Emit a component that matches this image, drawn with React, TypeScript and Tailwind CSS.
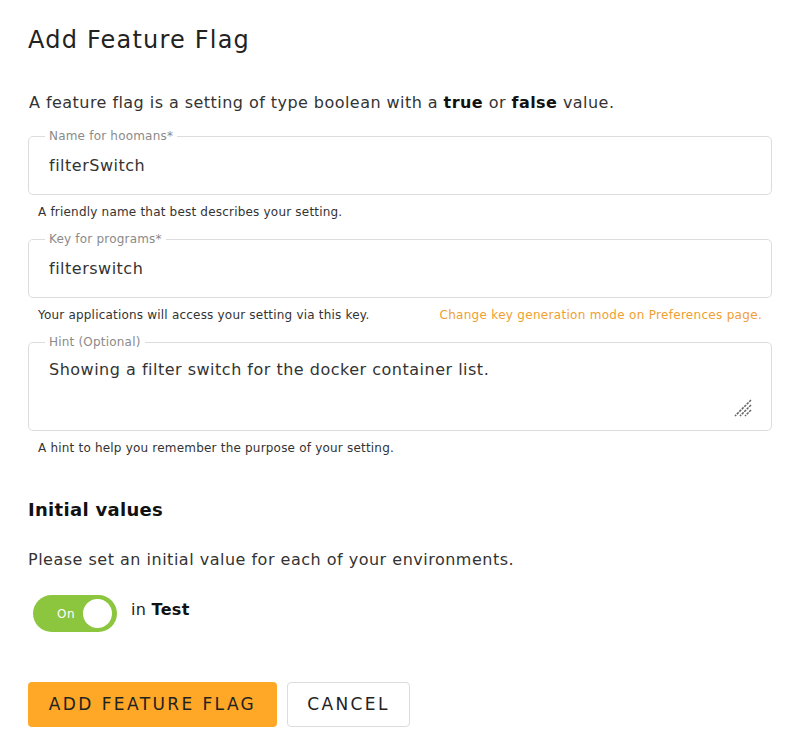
import { useState } from "react";

type FieldProps = {
    label: string;
    value: string;
    multiline?: boolean;
};

function OutlinedField({ label, value, multiline }: FieldProps) {
    return (
        <fieldset className="border border-[#dcdcdc] rounded-[5px] px-4 pb-0">
            <legend className="px-1 text-[12px] leading-[14px] text-[#8a8a8a] tracking-[0.2px]">
                {label}
            </legend>
            {multiline ? (
                <div className="relative h-[81px] px-1 pt-[9px] text-[16px] tracking-[0.5px] text-[#333]">
                    {value}
                    <svg
                        className="absolute right-[3px] bottom-[13px]"
                        width="18"
                        height="18"
                        viewBox="0 0 18 18"
                    >
                        <path
                            d="M17 1 L1 17 M17 6 L6 17 M17 11 L11 17"
                            stroke="#666"
                            strokeWidth="1.6"
                            strokeDasharray="2.5 1"
                        />
                    </svg>
                </div>
            ) : (
                <div className="h-[51px] px-1 pt-[11px] text-[16px] tracking-[0.5px] text-[#333]">
                    {value}
                </div>
            )}
        </fieldset>
    );
}

export default function App() {
    const [on, setOn] = useState(true);

    return (
        <div
            className="w-[800px] h-[751px] bg-white px-[28px] pt-[25px] text-[#222]"
            style={{ fontFamily: '"DejaVu Sans", "Open Sans", sans-serif' }}
        >
            <h1 className="text-[24px] leading-[30px] tracking-[1.2px] text-[#222]">
                Add Feature Flag
            </h1>
            <p className="mt-[37px] text-[16px] leading-[22px] tracking-[0.45px] pl-[1px] text-[#333]">
                A feature flag is a setting of type boolean with a{" "}
                <b className="text-[#111]">true</b> or <b className="text-[#111]">false</b> value.
            </p>

            <div className="mt-[15px]">
                <OutlinedField label="Name for hoomans*" value="filterSwitch" />
                <p className="mt-[8px] pl-[10px] text-[12px] tracking-[0.2px] text-[#333]">
                    A friendly name that best describes your setting.
                </p>
            </div>

            <div className="mt-[11px]">
                <OutlinedField label="Key for programs*" value="filterswitch" />
                <div className="mt-[8px] px-[10px] flex justify-between text-[12px] tracking-[0.2px]">
                    <span className="text-[#333]">
                        Your applications will access your setting via this key.
                    </span>
                    <span className="text-[#f0a030] tracking-[0.3px]">
                        Change key generation mode on Preferences page.
                    </span>
                </div>
            </div>

            <div className="mt-[11px]">
                <OutlinedField
                    label="Hint (Optional)"
                    value="Showing a filter switch for the docker container list."
                    multiline
                />
                <p className="mt-[8px] pl-[10px] text-[12px] tracking-[0.2px] text-[#333]">
                    A hint to help you remember the purpose of your setting.
                </p>
            </div>

            <h2 className="mt-[41px] text-[18px] font-bold leading-[24px] tracking-[0.3px] text-[#111]">
                Initial values
            </h2>
            <p className="mt-[27px] text-[16px] leading-[22px] tracking-[0.5px] text-[#333]">
                Please set an initial value for each of your environments.
            </p>

            <div className="mt-[24px] flex items-center gap-[14px] pl-[5px]">
                <button
                    onClick={() => setOn(!on)}
                    className="relative w-[84px] h-[37px] rounded-full bg-[#8cc63f] flex items-center"
                >
                    <span className="ml-[24px] text-[12px] text-white tracking-[0.5px]">On</span>
                    <span className="absolute right-[5px] top-[4px] w-[29px] h-[29px] rounded-full bg-white" />
                </button>
                <span className="text-[16px] -mt-[7px] tracking-[0.3px]">
                    in <b className="text-[#111]">Test</b>
                </span>
            </div>

            <div className="mt-[50px] flex gap-[10px]">
                <button className="h-[45px] w-[249px] rounded-[4px] bg-[#ffa726] text-[17px] tracking-[2.4px] text-[#222]">
                    ADD FEATURE FLAG
                </button>
                <button className="h-[45px] w-[123px] rounded-[4px] border border-[#dcdcdc] bg-white text-[17px] tracking-[2.4px] text-[#222]">
                    CANCEL
                </button>
            </div>
        </div>
    );
}
